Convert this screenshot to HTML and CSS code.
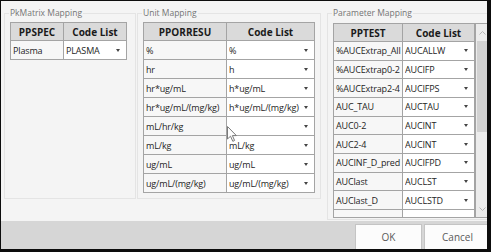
FILE: index.html
```html
<!DOCTYPE html>
<html>
<head>
<meta charset="utf-8">
<link rel="stylesheet" href="styles.css">
</head>
<body>
<div class="window">
  <div class="content">
    <fieldset class="group g-pk">
      <legend>PkMatrix Mapping</legend>
      <div class="tbl t-pk">
        <div class="h">PPSPEC</div><div class="h">Code List</div>
        <div class="c">Plasma</div><div class="d"><span class="v">PLASMA</span><span class="arr"></span></div>
      </div>
    </fieldset>
    <fieldset class="group g-unit">
      <legend>Unit Mapping</legend>
      <div class="tbl t-unit">
        <div class="h">PPORRESU</div><div class="h">Code List</div>
        <div class="c">%</div><div class="d"><span class="v">%</span><span class="arr"></span></div>
        <div class="c">hr</div><div class="d"><span class="v">h</span><span class="arr"></span></div>
        <div class="c">hr*ug/mL</div><div class="d"><span class="v">h*ug/mL</span><span class="arr"></span></div>
        <div class="c">hr*ug/mL/(mg/kg)</div><div class="d"><span class="v">h*ug/mL/(mg/kg)</span><span class="arr"></span></div>
        <div class="c">mL/hr/kg</div><div class="d"><span class="v"></span><span class="arr"></span></div>
        <div class="c">mL/kg</div><div class="d"><span class="v">mL/kg</span><span class="arr"></span></div>
        <div class="c">ug/mL</div><div class="d"><span class="v">ug/mL</span><span class="arr"></span></div>
        <div class="c">ug/mL/(mg/kg)</div><div class="d"><span class="v">ug/mL/(mg/kg)</span><span class="arr"></span></div>
      </div>
    </fieldset>
    <fieldset class="group g-param">
      <legend>Parameter Mapping</legend>
      <div class="pview">
        <div class="tbl t-param">
          <div class="h">PPTEST</div><div class="h">Code List</div>
          <div class="c">%AUCExtrap_All</div><div class="d"><span class="v">AUCALLW</span><span class="arr"></span></div>
          <div class="c">%AUCExtrap0-2</div><div class="d"><span class="v">AUCIFP</span><span class="arr"></span></div>
          <div class="c">%AUCExtrap2-4</div><div class="d"><span class="v">AUCIFPS</span><span class="arr"></span></div>
          <div class="c">AUC_TAU</div><div class="d"><span class="v">AUCTAU</span><span class="arr"></span></div>
          <div class="c">AUC0-2</div><div class="d"><span class="v">AUCINT</span><span class="arr"></span></div>
          <div class="c">AUC2-4</div><div class="d"><span class="v">AUCINT</span><span class="arr"></span></div>
          <div class="c">AUCINF_D_pred</div><div class="d"><span class="v">AUCIFPD</span><span class="arr"></span></div>
          <div class="c">AUClast</div><div class="d"><span class="v">AUCLST</span><span class="arr"></span></div>
          <div class="c">AUClast_D</div><div class="d"><span class="v">AUCLSTD</span><span class="arr"></span></div>
          <div class="c"></div><div class="d"><span class="v"></span></div>
        </div>
        <div class="sbar">
          <div class="sbtn"><svg width="7" height="4" viewBox="0 0 7 4"><path d="M0.5 3.5 L3.5 0.5 L6.5 3.5" fill="none" stroke="#b4b4b4" stroke-width="1"/></svg></div>
          <div class="thumb"></div>
          <div class="track"></div>
          <div class="sbtn"><svg width="7" height="4" viewBox="0 0 7 4"><path d="M0.5 0.5 L3.5 3.5 L6.5 0.5" fill="none" stroke="#b4b4b4" stroke-width="1"/></svg></div>
        </div>
      </div>
    </fieldset>
  </div>
  <div class="footer">
    <button class="btn">OK</button>
    <button class="btn btn-last">Cancel</button>
  </div>
  <svg class="cursor" width="12" height="17" viewBox="0 0 12 17"><path d="M0.5 0.5 L0.5 13 L3.5 10.2 L5.8 15.3 L7.6 14.5 L5.4 9.6 L9.4 9.6 Z" fill="#fdfdfd" stroke="#7a7a7a" stroke-width="1" stroke-linejoin="round"/></svg>
</div>
</body>
</html>
```
FILE: styles.css
```css
* { box-sizing: border-box; }
html, body {
  margin: 0;
  width: 491px;
  height: 252px;
  overflow: hidden;
  background: #0d0d0d;
}
.window {
  position: relative;
  margin: 1px 0 0 1px;
  width: 486px;
  height: 248px;
  background: #f4f4f4;
  overflow: hidden;
  display: flex;
  flex-direction: column;
  font-family: "Open Sans", "Noto Sans", sans-serif;
}
.content {
  height: 220px;
  display: flex;
  align-items: flex-start;
  gap: 1px;
  padding: 6px 0 0 3px;
}
.group {
  margin: 0;
  padding: 3px 5px 0 5px;
  border: 1px solid #e4e4e4;
  min-inline-size: 0;
  flex: none;
}
.group legend {
  padding: 0 1px;
  margin-left: -1px;
  font-size: 8.5px;
  line-height: 12px;
  color: #747474;
}
.g-pk { width: 132px; height: 192px; }
.g-unit { width: 184px; height: 192px; }
.g-param { width: 172px; height: 213px; margin-left: 5px; padding-top: 4px; }

.tbl {
  display: grid;
  gap: 1px;
  background: #a4a4a4;
  border: 1px solid #a4a4a4;
  grid-template-rows: 17px;
  grid-auto-rows: 18px;
}
.t-pk { width: 117px; grid-template-columns: 52px 62px; }
.t-unit { width: 172px; grid-template-columns: 82px 87px; }
.t-param {
  width: 142px;
  grid-template-columns: 68px 71px;
  grid-auto-rows: 17.67px;
  border-width: 0 1px 0 0;
  flex: none;
  align-content: start;
}
.h {
  background: #dadada;
  font-size: 10px;
  font-weight: 700;
  color: #1a1a1a;
  display: flex;
  align-items: center;
  justify-content: center;
  white-space: nowrap;
}
.c, .d {
  font-size: 9px;
  letter-spacing: -0.15px;
  color: #252525;
  display: flex;
  align-items: center;
  white-space: nowrap;
  overflow: hidden;
  padding-left: 2px;
}
.c { background: #f7f7f7; }
.d { background: #ffffff; padding-right: 6px; }
.d .v { flex: 1; overflow: hidden; }
.arr {
  flex: none;
  width: 0;
  height: 0;
  border-left: 2.5px solid transparent;
  border-right: 2.5px solid transparent;
  border-top: 3px solid #444;
  margin-left: 1px;
}
.pview {
  display: flex;
  height: 195px;
  border: 1px solid #a4a4a4;
  overflow: hidden;
  background: #ffffff;
}
.sbar {
  width: 14px;
  flex: none;
  display: flex;
  flex-direction: column;
  background: #ececec;
}
.sbtn {
  height: 17px;
  display: flex;
  align-items: center;
  justify-content: center;
  padding-right: 1px;
}
.thumb {
  height: 91px;
  margin: 0 1px;
  background: #d2d2d2;
}
.track { flex: 1; }
.footer {
  height: 28px;
  background: #d6d6d6;
  display: flex;
  justify-content: flex-end;
  align-items: flex-start;
  gap: 2px;
  padding-top: 3px;
}
.btn {
  width: 67px;
  height: 30px;
  flex: none;
  background: #fcfcfc;
  border: 1px solid #c4c4c4;
  font-family: "Open Sans", "Noto Sans", sans-serif;
  font-size: 10px;
  color: #5a5a5a;
  padding: 0 0 4px 0;
}
.btn-last { margin-right: -4px; }
.cursor {
  position: absolute;
  left: 226px;
  top: 125px;
}
```
